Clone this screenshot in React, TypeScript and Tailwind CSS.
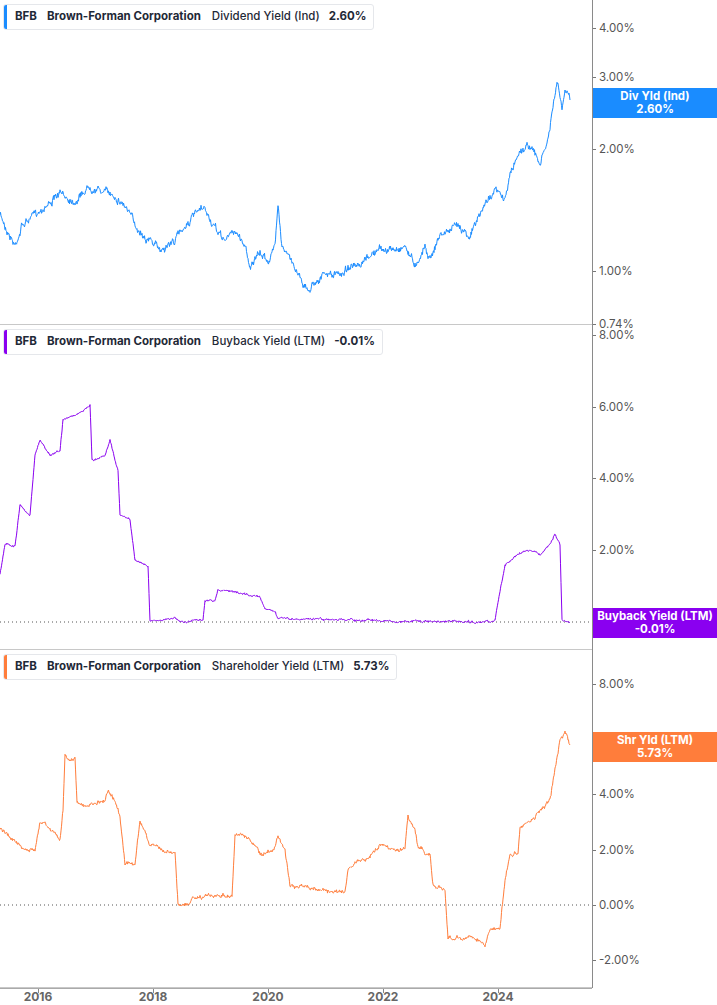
import React from "react";

type P = [number, number];
function rng(seed: number) {
  let s = seed;
  return () => {
    s = (s * 16807) % 2147483647;
    return s / 2147483647;
  };
}
function build(pts: P[], amp: number, seed: number, step = 0.5) {
  const r = rng(seed);
  const out: string[] = [];
  let walk = 0;
  for (let i = 0; i < pts.length - 1; i++) {
    const [x0, y0] = pts[i];
    const [x1, y1] = pts[i + 1];
    if (x1 === x0) { out.push(`${x0},${y0}`); continue; }
    for (let x = x0; x < x1; x += step) {
      const t = (x - x0) / (x1 - x0);
      walk = walk * 0.85 + (r() - 0.5) * amp;
      out.push(`${x},${(y0 + (y1 - y0) * t + walk + (r() - 0.5) * amp).toFixed(1)}`);
    }
  }
  const l = pts[pts.length - 1];
  out.push(`${l[0]},${l[1]}`);
  return out.join(" ");
}

const p1: P[] = [[0,215],[10,235],[15,245],[22,225],[35,215],[45,205],[60,195],[75,200],[90,185],[100,190],[115,195],[125,205],[135,225],[150,240],[160,250],[175,240],[185,225],[195,215],[205,210],[215,230],[225,240],[235,230],[245,245],[250,265],[260,255],[270,260],[275,245],[278,200],[282,245],[290,260],[300,275],[308,292],[315,280],[325,275],[340,275],[350,265],[360,270],[370,255],[380,250],[395,250],[405,245],[415,265],[420,255],[425,245],[430,258],[440,235],[450,230],[460,225],[470,235],[480,215],[490,195],[495,190],[505,200],[510,175],[520,150],[530,145],[540,165],[548,140],[552,115],[557,82],[562,110],[565,92],[570,100]];
const p2: P[] = [[0,575],[5,545],[15,545],[20,505],[30,515],[35,455],[40,440],[50,455],[60,450],[63,420],[75,415],[85,410],[90,405],[92,460],[105,455],[110,440],[118,470],[120,515],[130,520],[135,560],[148,565],[150,620],[165,620],[175,618],[180,622],[190,622],[192,620],[203,620],[205,600],[215,600],[218,590],[240,594],[260,597],[265,610],[275,612],[278,618],[300,619],[350,620],[400,621],[490,622],[495,620],[505,565],[510,560],[525,550],[540,555],[550,545],[555,535],[560,545],[562,620],[570,622]];
const p3: P[] = [[0,830],[15,840],[25,850],[35,850],[40,820],[48,825],[60,840],[63,810],[65,755],[75,760],[77,805],[90,805],[105,800],[108,790],[115,800],[120,815],[125,865],[135,865],[140,820],[150,845],[170,850],[175,855],[178,905],[190,905],[192,898],[205,897],[208,895],[232,895],[235,835],[250,840],[260,855],[275,850],[278,835],[285,850],[290,885],[320,890],[335,892],[345,892],[348,870],[355,862],[370,858],[380,845],[395,850],[405,848],[408,815],[415,830],[418,848],[430,855],[433,885],[445,888],[448,938],[465,937],[470,933],[478,940],[485,945],[490,930],[500,928],[505,880],[510,855],[518,850],[520,825],[530,822],[540,810],[550,800],[555,770],[560,740],[565,732],[570,745]];

const font = { fontFamily: "Inter, 'Liberation Sans', sans-serif" };

function Legend({ color, metric, value }: { color: string; metric: string; value: string }) {
  return (
    <div className="absolute left-[3px] top-[4px] flex items-center h-[26px] bg-white border border-[#e5e7eb] rounded-[3px] overflow-hidden text-[11.5px] text-[#1f2937] pr-[7px]">
      <div className="w-[3px] h-full" style={{ background: color }} />
      <span className="font-bold ml-[8px]">BFB</span>
      <span className="font-bold ml-[10px]">Brown-Forman Corporation</span>
      <span className="ml-[11px] font-medium">{metric}</span>
      <span className="font-bold ml-[9px]">{value}</span>
    </div>
  );
}

function Panel({ top, h, pts, color, amp, seed, legend, ticks, tag, zero }: any) {
  return (
    <div className="flex" style={{ height: h }}>
      <div className="relative w-[592px] border-b border-[#c8c8c8]">
        <svg className="absolute inset-0" width={592} height={h} viewBox={`0 ${top} 592 ${h}`}>
          {zero !== undefined && <line x1={0} x2={592} y1={zero} y2={zero} stroke="#555" strokeWidth={1} strokeDasharray="1 3" />}
          <polyline points={build(pts, amp, seed)} fill="none" stroke={color} strokeWidth={1} strokeLinejoin="miter" />
        </svg>
        {legend}
      </div>
      <div className="relative flex-1 border-l border-[#8a8a8a]">
        {ticks.map(([label, y]: [string, number]) => (
          <div key={label} className="absolute left-0 flex items-center text-[11.5px] text-[#555]" style={{ top: y - top - 8 }}>
            <div className="w-[3px] h-[1px] bg-[#777] mr-[3px]" />
            {label}
          </div>
        ))}
        <div className="absolute left-0 right-0 flex flex-col items-center justify-center text-white font-bold text-[11.5px] leading-[13px]" style={{ top: tag.y - top, height: 30, background: color }}>
          <span>{tag.a}</span>
          <span>{tag.b}</span>
        </div>
      </div>
    </div>
  );
}

export default function App() {
  return (
    <div className="w-[717px] h-[1005px] bg-white overflow-hidden" style={font}>
      <Panel top={0} h={325} pts={p1} color="#1a8cff" amp={4} seed={7}
        legend={<Legend color="#1a8cff" metric="Dividend Yield (Ind)" value="2.60%" />}
        ticks={[["4.00%", 28], ["3.00%", 77], ["2.00%", 149], ["1.00%", 271], ["0.74%", 324]]}
        tag={{ y: 88, a: "Div Yld (Ind)", b: "2.60%" }} />
      <Panel top={325} h={325} pts={p2} color="#8a00f0" amp={1.2} seed={11} zero={622}
        legend={<Legend color="#8a00f0" metric="Buyback Yield (LTM)" value="-0.01%" />}
        ticks={[["8.00%", 335], ["6.00%", 407], ["4.00%", 478], ["2.00%", 550]]}
        tag={{ y: 608, a: "Buyback Yield (LTM)", b: "-0.01%" }} />
      <Panel top={650} h={338} pts={p3} color="#ff7d3b" amp={2.2} seed={23} zero={905}
        legend={<Legend color="#ff7d3b" metric="Shareholder Yield (LTM)" value="5.73%" />}
        ticks={[["8.00%", 684], ["4.00%", 794], ["2.00%", 850], ["0.00%", 905], ["-2.00%", 960]]}
        tag={{ y: 732, a: "Shr Yld (LTM)", b: "5.73%" }} />
      <div className="relative w-[592px] h-[17px] border-t border-[#aaa]">
        {[["2016", 38], ["2018", 153], ["2020", 268], ["2022", 383], ["2024", 498]].map(([l, x]) => (
          <React.Fragment key={l}>
            <div className="absolute top-0 w-[1px] h-[4px] bg-[#888]" style={{ left: x as number }} />
            <div className="absolute top-[-1px] text-[12px] font-bold text-[#666] w-[40px] text-center" style={{ left: (x as number) - 20 }}>{l}</div>
          </React.Fragment>
        ))}
      </div>
    </div>
  );
}
